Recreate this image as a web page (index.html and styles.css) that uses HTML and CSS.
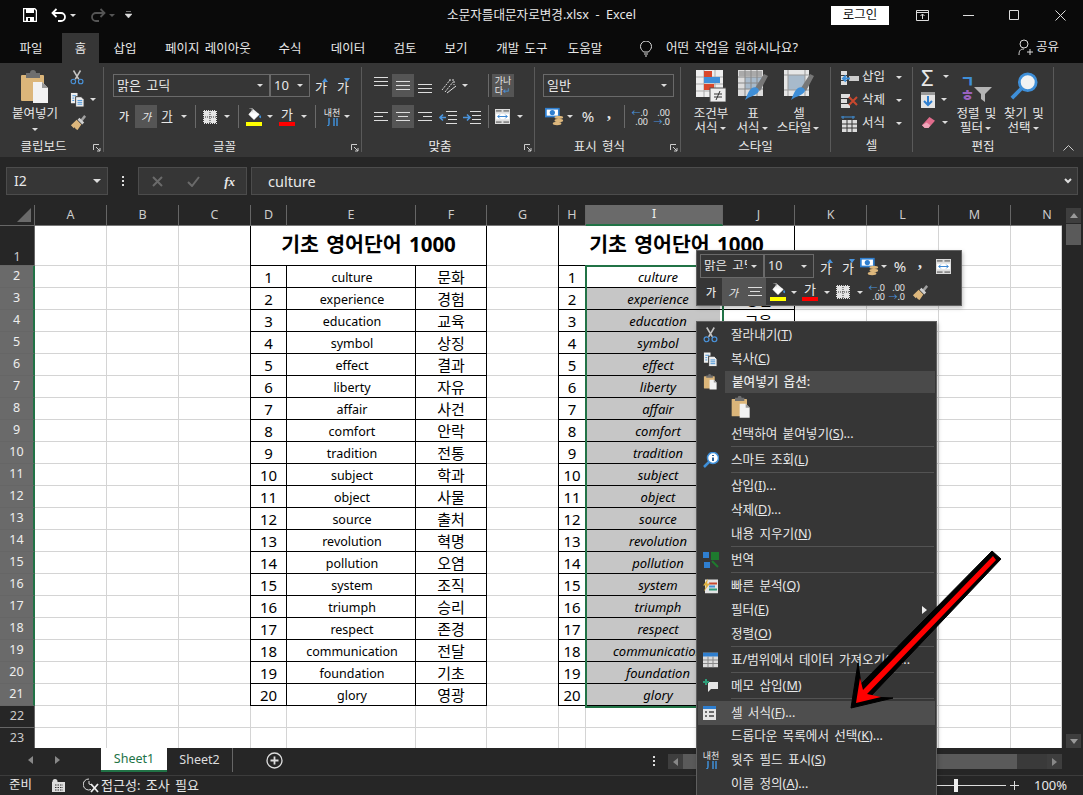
FILE: index.html
```html
<!DOCTYPE html>
<html lang="ko">
<head>
<meta charset="utf-8">
<title>소문자를대문자로변경.xlsx - Excel</title>
<link rel="stylesheet" href="styles.css">
</head>
<body>
<svg class="defs" width="0" height="0" aria-hidden="true">
  <symbol id="paste" viewBox="0 0 30 34"><rect x="1" y="5" width="23" height="26" rx="1" fill="#dcb67a"/><path d="M6 8V3h4a3 3 0 0 1 6 0h4v5z" fill="#6f6f6f"/><path d="M13 12h9l6 6v15H13z" fill="#f2f2f2"/><path d="M22 12v6h6z" fill="#9a9a9a"/></symbol>
  <symbol id="sciss" viewBox="0 0 16 16"><path d="M4 0l6 10M12 0L6 10" stroke="#c4c4c4" stroke-width="1.7" fill="none"/><circle cx="3.8" cy="12.6" r="2.6" fill="none" stroke="#4a94dc" stroke-width="1.3"/><circle cx="12.2" cy="12.6" r="2.6" fill="none" stroke="#4a94dc" stroke-width="1.3"/></symbol>
  <symbol id="copy" viewBox="0 0 16 16"><path d="M1 1h7v11H1z" fill="#eee"/><path d="M2.500 4h4M2.500 6.500h2M2.500 9h2" stroke="#3f8fd8"/><path d="M6 5h6l3 3v8H6z" fill="#eee" stroke="#363636"/><path d="M8 9h5M8 11h5M8 13h5" stroke="#3f8fd8"/></symbol>
  <symbol id="brush" viewBox="0 0 18 18"><path d="M11 6l4-5 2 2-4 5z" fill="#a0a0a0"/><path d="M10 4l5 5-2 2-5-5z" fill="#d0d0d0"/><path d="M7 6l5 5-4 6-2-1-1-2-1 1-3-3z" fill="#ddb77c"/></symbol>
  <symbol id="bucket" viewBox="0 0 18 14"><path d="M8 1l7 6-6 6-6-6z" fill="#f2f2f2"/><path d="M4 6h10l-5 6z" fill="#fff"/><path d="M7 4V0h-3" stroke="#bbb" fill="none"/><path d="M15 8c2-1 2 3 1 3s-2-2-1-3z" fill="#3f8fd8"/></symbol>
  <symbol id="border" viewBox="0 0 14 14"><rect width="14" height="14" fill="#e4e4e4"/><path d="M0 .5h14M.5 0v14M13.500 0v14M0 13.500h14M0 7h14M7 0v14" stroke="#363636" stroke-dasharray="1 1"/></symbol>
  <symbol id="money" viewBox="0 0 22 22"><rect x="0" y="1" width="17" height="11" fill="#2f7fd0"/><rect x="2" y="3" width="13" height="7" fill="#fff"/><circle cx="8.500" cy="6.500" r="3" fill="#2f7fd0"/><ellipse cx="16" cy="12" rx="5" ry="2" fill="#ddb77c"/><ellipse cx="16" cy="15.500" rx="5" ry="2" fill="#ddb77c"/><ellipse cx="14" cy="19" rx="5" ry="2" fill="#ddb77c"/></symbol>
  <symbol id="merge" viewBox="0 0 16 16"><rect width="16" height="16" fill="#ddd"/><path d="M1 1h6v2H1zM9 1h6v2H9zM1 13h6v2H1zM9 13h6v2H9z" fill="#888"/><rect x="1" y="5" width="14" height="6" fill="#fff"/><path d="M3 8h10M5 6l-2 2 2 2M11 6l2 2-2 2" stroke="#2f7fd0" fill="none"/></symbol>
  <symbol id="tL" viewBox="0 0 14 14"><path d="M0 2.500h14M0 6.500h9M0 10.500h14" stroke="#ddd"/></symbol>
  <symbol id="tC" viewBox="0 0 14 14"><path d="M0 2.500h14M2 6.500h10M0 10.500h14" stroke="#ddd"/></symbol>
  <symbol id="tR" viewBox="0 0 14 14"><path d="M0 2.500h14M5 6.500h9M0 10.500h14" stroke="#ddd"/></symbol>
  <symbol id="v3" viewBox="0 0 14 14"><path d="M0 2.500h14M0 6.500h14M0 10.500h14" stroke="#ddd"/></symbol>
  <symbol id="indL" viewBox="0 0 18 14"><path d="M7 1.500h11M9 5.500h9M9 9.500h9M7 13.500h11" stroke="#ddd"/><path d="M7 7.500H1M4 4.500L1 7.500l3 3" stroke="#4a94dc" stroke-width="1.600" fill="none"/></symbol>
  <symbol id="indR" viewBox="0 0 18 14"><path d="M7 1.500h11M9 5.500h9M9 9.500h9M7 13.500h11" stroke="#ddd"/><path d="M0 7.500h6M4 4.500l3 3-3 3" stroke="#4a94dc" stroke-width="1.600" fill="none"/></symbol>
  <symbol id="orient" viewBox="0 0 16 16"><path d="M1 12L9 2M4 14l8-10M8 2h5v5" stroke="#ddd" fill="none" stroke-dasharray="2 1"/><path d="M6 15l9-7" stroke="#ddd"/></symbol>
  <symbol id="cond" viewBox="0 0 30 32"><rect width="27" height="27" fill="#eee"/><path d="M8 0v27M19 0v27M0 7h27M0 14h27M0 21h27" stroke="#aaa"/><rect x="8" y="1" width="8" height="6" fill="#d9482b"/><rect x="8" y="7" width="16" height="6" fill="#3f8fd8"/><rect x="8" y="14" width="10" height="6" fill="#d9482b"/><rect x="14" y="18" width="16" height="14" fill="#eee" stroke="#555"/><path d="M18 24h8M18 27h8M24 21l-4 9" stroke="#333"/></symbol>
  <symbol id="tbl" viewBox="0 0 30 32"><rect width="25" height="26" fill="#dcdcdc"/><rect x="1" y="1" width="23" height="5" fill="#aaa"/><rect x="7" y="7" width="17" height="12" fill="#a8bacb"/><path d="M7 0v26M13 0v26M19 0v26M0 7h25M0 13h25M0 19h25" stroke="#888"/><path d="M17 18l9-14 4 2-8 15z" fill="#777"/><path d="M14 18c3-2 7 0 7 3-3 5-9 5-14 9 2-4 3-9 7-12z" fill="#3f8fd8"/></symbol>
  <symbol id="sty" viewBox="0 0 30 32"><rect width="25" height="26" fill="#e6e6e6"/><rect x="4" y="5" width="17" height="15" fill="#a8bacb"/><path d="M0 5h25M4 0v26M21 0v26M0 20h25" stroke="#999"/><path d="M17 18l9-14 4 2-8 15z" fill="#777"/><path d="M14 18c3-2 7 0 7 3-3 5-9 5-14 9 2-4 3-9 7-12z" fill="#3f8fd8"/></symbol>
  <symbol id="cIns" viewBox="0 0 18 14"><path d="M0 0h6v4H0zM0 5h6v4H0zM0 10h6v4H0z" fill="#ddd"/><rect x="8" y="5" width="10" height="5" fill="#ccc"/><path d="M9 7.500H2M5 4.500l-3 3 3 3" stroke="#3f8fd8" stroke-width="2" fill="none"/></symbol>
  <symbol id="cDel" viewBox="0 0 18 14"><path d="M0 0h9v4H0zM0 5h6v4H0zM0 10h9v4H0z" fill="#ddd"/><path d="M8 3l8 8M16 3l-8 8" stroke="#c8482e" stroke-width="2"/></symbol>
  <symbol id="cFmt" viewBox="0 0 18 16"><path d="M0 1h14M2 0v3M12 0v3" stroke="#3f8fd8"/><rect x="1" y="4" width="15" height="12" fill="#ddd"/><path d="M6 4v12M11 4v12M1 8h15M1 12h15" stroke="#363636"/></symbol>
  <symbol id="fillD" viewBox="0 0 14 16"><rect width="14" height="16" fill="#e4e4e4"/><rect width="14" height="3" fill="#999"/><path d="M7 4v9M3 9l4 4 4-4" stroke="#2f7fd0" stroke-width="2" fill="none"/></symbol>
  <symbol id="erase" viewBox="0 0 16 14"><path d="M9 1l6 4-7 8H4L1 10z" fill="#e06c8c"/><path d="M1 10l3 3h4l2-3-4-3z" fill="#f0a6ba"/></symbol>
  <symbol id="funnel" viewBox="0 0 18 16"><path d="M0 1h18l-7 7v8l-4-3V8z" fill="#b4b4b4"/></symbol>
  <symbol id="mag" viewBox="0 0 30 30"><circle cx="19" cy="11" r="9" fill="#f2f2f2" stroke="#3f8fd8" stroke-width="3"/><path d="M12 18L2 28" stroke="#3f8fd8" stroke-width="4"/></symbol>
  <symbol id="launch" viewBox="0 0 8 8"><path d="M.5 6V.5H6M3 3l4 4M7 4v3H4" stroke="#ccc" fill="none"/></symbol>
</svg>

<header class="title">
  <div class="qat">
    <svg class="q-save" width="14" height="14" viewBox="0 0 14 14"><path d="M.5.5h11l2 2v11H.5z" fill="none" stroke="#fff" stroke-width="1.500"/><path d="M3 1h8v4H3zM3 9h8v5H3z" fill="#fff"/><path d="M5 10h2v3H5z" fill="#0a0a0a"/></svg>
    <svg class="q-undo" width="16" height="14" viewBox="0 0 16 14"><path d="M2 5h8a4 4 0 0 1 0 8H7M5.500 1L1.500 5l4 4" fill="none" stroke="#fff" stroke-width="1.800"/></svg>
    <i class="a a-q"></i>
    <svg class="q-redo" width="16" height="14" viewBox="0 0 16 14"><path d="M14 5H6a4 4 0 0 0 0 8h3M10.500 1l4 4-4 4" fill="none" stroke="#555" stroke-width="1.800"/></svg>
    <i class="a a-q dim"></i>
    <svg class="q-cust" width="7" height="8" viewBox="0 0 7 8"><path d="M1 .5h5M0 3h7l-3.500 4z" fill="#ddd" stroke="#ddd" stroke-width=".5"/></svg>
  </div>
  <div class="doc">소문자를대문자로변경.xlsx &nbsp;-&nbsp; Excel</div>
  <div class="win">
    <button class="login">로그인</button>
    <span class="wb"><svg width="13" height="11" viewBox="0 0 13 11"><path d="M.5.500h12v10H.5zM.5 2.500h12M6.500 9V4M4.500 6l2-2 2 2" fill="none" stroke="#ddd"/></svg></span>
    <span class="wb"><svg width="11" height="1" viewBox="0 0 11 1"><path d="M0 .5h11" stroke="#ddd"/></svg></span>
    <span class="wb"><svg width="10" height="10" viewBox="0 0 10 10"><path d="M.5.500h9v9h-9z" fill="none" stroke="#ddd"/></svg></span>
    <span class="wb"><svg width="11" height="11" viewBox="0 0 11 11"><path d="M.5.500l10 10M10.500.500l-10 10" stroke="#ddd"/></svg></span>
  </div>
</header>

<nav class="tabs">
  <div class="tabset">
    <span>파일</span><span class="on">홈</span><span>삽입</span><span>페이지 레이아웃</span><span>수식</span><span>데이터</span><span>검토</span><span>보기</span><span>개발 도구</span><span>도움말</span>
  </div>
  <svg class="bulb" width="12" height="16" viewBox="0 0 12 16"><path d="M3.500 11C2 9 .5 8 .5 5.500a5.500 5.500 0 0 1 11 0C11.500 8 10 9 8.500 11zM4 13h4M5 15h2" fill="none" stroke="#ddd"/></svg>
  <span class="tell">어떤 작업을 원하시나요?</span>
  <div class="share">
    <svg width="15" height="17" viewBox="0 0 15 17"><circle cx="6" cy="5" r="4" fill="none" stroke="#ddd"/><path d="M1 16c0-4 1-6 5-6M9 13h6M12 10v6" fill="none" stroke="#ddd"/></svg>
    <span>공유</span>
  </div>
</nav>

<section class="ribbon">
  <div class="group g-clip">
    <div class="g-body clip">
      <div class="big-paste">
        <svg width="30" height="34"><use href="#paste"/></svg>
        <span>붙여넣기</span>
        <i class="a"></i>
      </div>
      <div class="clip-side">
        <svg width="14" height="15"><use href="#sciss"/></svg>
        <div class="copy-row"><svg width="15" height="15"><use href="#copy"/></svg><i class="a"></i></div>
        <svg width="17" height="17"><use href="#brush"/></svg>
      </div>
    </div>
    <div class="g-label"><span>클립보드</span><svg class="launch" width="8" height="8"><use href="#launch"/></svg></div>
  </div>

  <div class="group g-font">
    <div class="g-body stack">
      <div class="row">
        <div class="sel w157"><span>맑은 고딕</span><i class="a"></i></div>
        <div class="sel w40"><span>10</span><i class="a"></i></div>
        <span class="b gaup">가<i class="up"></i></span>
        <span class="b gadn">가<i class="dn"></i></span>
      </div>
      <div class="row r2">
        <span class="b fb">가</span><span class="b fi hl">가</span><span class="b fu w20">가</span><i class="a w14"></i>
        <i class="sp ml4"></i>
        <span class="b ml3"><svg width="14" height="14"><use href="#border"/></svg></span><i class="a"></i>
        <i class="sp ml5"></i>
        <span class="b ml4 col"><svg width="18" height="13"><use href="#bucket"/></svg><i class="bar yel"></i></span><i class="a w10"></i>
        <span class="b ml1 col fc">가<i class="bar red"></i></span><i class="a"></i>
        <i class="sp ml5"></i>
        <span class="b ml5 col phon"><small>내천</small><svg width="14" height="8" viewBox="0 0 14 8"><path d="M2 8c2 0 2-1 2-3V0M9 0v8M12 0v8" stroke="#3f8fd8" stroke-width="1.500" fill="none"/></svg></span><i class="a w8"></i>
      </div>
    </div>
    <div class="g-label"><span>글꼴</span><svg class="launch" width="8" height="8"><use href="#launch"/></svg></div>
  </div>

  <div class="group g-align">
    <div class="g-body stack">
      <div class="row">
        <span class="b"><svg class="nudge-up" width="14" height="14"><use href="#v3"/></svg></span>
        <span class="b hl"><svg width="14" height="14"><use href="#v3"/></svg></span>
        <span class="b"><svg class="nudge-dn" width="14" height="14"><use href="#v3"/></svg></span>
        <span class="b ml2"><svg width="16" height="16"><use href="#orient"/></svg></span><i class="a w10"></i>
        <i class="sp ml18"></i>
        <span class="b hl ml3 wrap">가나<br>다<em>↵</em></span>
      </div>
      <div class="row r2">
        <span class="b"><svg width="14" height="14"><use href="#tL"/></svg></span>
        <span class="b hl"><svg width="14" height="14"><use href="#tC"/></svg></span>
        <span class="b"><svg width="14" height="14"><use href="#tR"/></svg></span>
        <span class="b ml1"><svg width="18" height="14"><use href="#indL"/></svg></span>
        <span class="b ml2"><svg width="18" height="14"><use href="#indR"/></svg></span>
        <i class="sp ml5"></i>
        <span class="b ml2"><svg width="15" height="15"><use href="#merge"/></svg></span><i class="a ml1"></i>
      </div>
    </div>
    <div class="g-label"><span>맞춤</span><svg class="launch" width="8" height="8"><use href="#launch"/></svg></div>
  </div>

  <div class="group g-num">
    <div class="g-body stack">
      <div class="row"><div class="sel w131"><span>일반</span><i class="a"></i></div></div>
      <div class="row r2">
        <span class="b"><svg width="19" height="19"><use href="#money"/></svg></span><i class="a w10"></i>
        <span class="b ml2 pct">%</span><span class="b w20 comma">,</span>
        <i class="sp ml5"></i>
        <span class="b ml3 dec"><span><em>←</em>.0</span><span>.00</span></span>
        <span class="b dec"><span>.00</span><span><em>→</em>.0</span></span>
      </div>
    </div>
    <div class="g-label"><span>표시 형식</span><svg class="launch" width="8" height="8"><use href="#launch"/></svg></div>
  </div>

  <div class="group g-style">
    <div class="g-body bigs">
      <div class="bigb w44"><svg width="30" height="32"><use href="#cond"/></svg><span>조건부</span><span>서식<i class="a w10 inl"></i></span></div>
      <div class="bigb w40"><svg width="30" height="32"><use href="#tbl"/></svg><span>표</span><span>서식<i class="a w10 inl"></i></span></div>
      <div class="bigb w52"><svg width="30" height="32"><use href="#sty"/></svg><span>셀</span><span>스타일<i class="a w10 inl"></i></span></div>
    </div>
    <div class="g-label plain"><span>스타일</span></div>
  </div>

  <div class="group g-cell">
    <div class="g-body cellcol">
      <div class="c-row"><svg width="18" height="14"><use href="#cIns"/></svg><span>삽입</span><i class="a"></i></div>
      <div class="c-row"><svg width="18" height="14"><use href="#cDel"/></svg><span>삭제</span><i class="a"></i></div>
      <div class="c-row"><svg width="18" height="16"><use href="#cFmt"/></svg><span>서식</span><i class="a"></i></div>
    </div>
    <div class="g-label plain"><span>셀</span></div>
  </div>

  <div class="group g-edit">
    <div class="g-body edit">
      <div class="e-side">
        <div class="e-row"><span class="sigma">Σ</span><i class="a"></i></div>
        <div class="e-row"><svg width="14" height="16"><use href="#fillD"/></svg><i class="a"></i></div>
        <div class="e-row"><svg width="15" height="13"><use href="#erase"/></svg><i class="a"></i></div>
      </div>
      <div class="bigb w47">
        <div class="sorti"><div class="ko"><b class="kb">ㄱ</b><b class="kp">ㅎ</b></div><svg width="18" height="16"><use href="#funnel"/></svg></div>
        <span>정렬 및</span><span>필터<i class="a w10 inl"></i></span>
      </div>
      <div class="bigb w48"><svg width="28" height="28"><use href="#mag"/></svg><span>찾기 및</span><span>선택<i class="a w10 inl"></i></span></div>
    </div>
    <div class="g-label plain"><span>편집</span></div>
  </div>
  <div class="collapse"><svg width="11" height="6" viewBox="0 0 11 6"><path d="M.5 5.500l5-5 5 5" fill="none" stroke="#ccc"/></svg></div>
</section>

<section class="formula">
  <div class="namebox"><span>I2</span><i class="a big"></i></div>
  <div class="vdots"><i></i><i></i><i></i></div>
  <div class="fbtns">
    <svg width="11" height="11" viewBox="0 0 11 11"><path d="M1 1l9 9M10 1l-9 9" stroke="#6a6a6a" stroke-width="2"/></svg>
    <svg width="13" height="11" viewBox="0 0 13 11"><path d="M1 6l4 4 7-9" stroke="#6a6a6a" stroke-width="2" fill="none"/></svg>
    <span class="fx">fx</span>
  </div>
  <div class="finput"><span>culture</span><svg width="8" height="6" viewBox="0 0 8 6"><path d="M1 1l3 3 3-3" stroke="#ddd" stroke-width="2" fill="none"/></svg></div>
</section>

<main class="sheet">
  <div class="corner"><i></i></div>
  <div class="colheads">
    <span>A</span><span>B</span><span>C</span><span>D</span><span>E</span><span>F</span><span>G</span><span>H</span><span class="cur">I</span><span>J</span><span>K</span><span>L</span><span>M</span><span class="clipcol">N</span>
  </div>
  <div class="vscroll"><i class="vb"><i class="tri-up"></i></i><i class="vthumb"></i><i class="vb low"><i class="tri-dn"></i></i></div>
  <div class="rowheads">
    <span class="r1">1</span><span class="cur">2</span><span class="cur">3</span><span class="cur">4</span><span class="cur">5</span><span class="cur">6</span><span class="cur">7</span><span class="cur">8</span><span class="cur">9</span><span class="cur">10</span><span class="cur">11</span><span class="cur">12</span><span class="cur">13</span><span class="cur">14</span><span class="cur">15</span><span class="cur">16</span><span class="cur">17</span><span class="cur">18</span><span class="cur">19</span><span class="cur">20</span><span class="cur">21</span><span>22</span><span class="last">23</span>
  </div>
  <div class="cells">
    <div class="lines"><i></i><i></i><i></i><i></i><i></i><i></i><i></i><i></i><i></i><i></i><i></i><i></i><i></i><i></i></div>
    <table class="vocab t1">
      <colgroup><col class="c-n"><col class="c-e"><col class="c-k"></colgroup>
      <tr class="head"><td colspan="3">기초 영어단어 1000</td></tr>
      <tr><td class="n">1</td><td class="e">culture</td><td class="k">문화</td></tr>
      <tr><td class="n">2</td><td class="e">experience</td><td class="k">경험</td></tr>
      <tr><td class="n">3</td><td class="e">education</td><td class="k">교육</td></tr>
      <tr><td class="n">4</td><td class="e">symbol</td><td class="k">상징</td></tr>
      <tr><td class="n">5</td><td class="e">effect</td><td class="k">결과</td></tr>
      <tr><td class="n">6</td><td class="e">liberty</td><td class="k">자유</td></tr>
      <tr><td class="n">7</td><td class="e">affair</td><td class="k">사건</td></tr>
      <tr><td class="n">8</td><td class="e">comfort</td><td class="k">안락</td></tr>
      <tr><td class="n">9</td><td class="e">tradition</td><td class="k">전통</td></tr>
      <tr><td class="n">10</td><td class="e">subject</td><td class="k">학과</td></tr>
      <tr><td class="n">11</td><td class="e">object</td><td class="k">사물</td></tr>
      <tr><td class="n">12</td><td class="e">source</td><td class="k">출처</td></tr>
      <tr><td class="n">13</td><td class="e">revolution</td><td class="k">혁명</td></tr>
      <tr><td class="n">14</td><td class="e">pollution</td><td class="k">오염</td></tr>
      <tr><td class="n">15</td><td class="e">system</td><td class="k">조직</td></tr>
      <tr><td class="n">16</td><td class="e">triumph</td><td class="k">승리</td></tr>
      <tr><td class="n">17</td><td class="e">respect</td><td class="k">존경</td></tr>
      <tr><td class="n">18</td><td class="e">communication</td><td class="k">전달</td></tr>
      <tr><td class="n">19</td><td class="e">foundation</td><td class="k">기초</td></tr>
      <tr><td class="n">20</td><td class="e">glory</td><td class="k">영광</td></tr>
    </table>
    <table class="vocab t2">
      <colgroup><col class="c-n2"><col class="c-e2"><col class="c-k2"></colgroup>
      <tr class="head"><td colspan="3">기초 영어단어 1000</td></tr>
      <tr><td class="n">1</td><td class="e i active">culture</td><td class="k">문화</td></tr>
      <tr><td class="n">2</td><td class="e i">experience</td><td class="k">경험</td></tr>
      <tr><td class="n">3</td><td class="e i">education</td><td class="k">교육</td></tr>
      <tr><td class="n">4</td><td class="e i">symbol</td><td class="k">상징</td></tr>
      <tr><td class="n">5</td><td class="e i">effect</td><td class="k">결과</td></tr>
      <tr><td class="n">6</td><td class="e i">liberty</td><td class="k">자유</td></tr>
      <tr><td class="n">7</td><td class="e i">affair</td><td class="k">사건</td></tr>
      <tr><td class="n">8</td><td class="e i">comfort</td><td class="k">안락</td></tr>
      <tr><td class="n">9</td><td class="e i">tradition</td><td class="k">전통</td></tr>
      <tr><td class="n">10</td><td class="e i">subject</td><td class="k">학과</td></tr>
      <tr><td class="n">11</td><td class="e i">object</td><td class="k">사물</td></tr>
      <tr><td class="n">12</td><td class="e i">source</td><td class="k">출처</td></tr>
      <tr><td class="n">13</td><td class="e i">revolution</td><td class="k">혁명</td></tr>
      <tr><td class="n">14</td><td class="e i">pollution</td><td class="k">오염</td></tr>
      <tr><td class="n">15</td><td class="e i">system</td><td class="k">조직</td></tr>
      <tr><td class="n">16</td><td class="e i">triumph</td><td class="k">승리</td></tr>
      <tr><td class="n">17</td><td class="e i">respect</td><td class="k">존경</td></tr>
      <tr><td class="n">18</td><td class="e i">communication</td><td class="k">전달</td></tr>
      <tr><td class="n">19</td><td class="e i">foundation</td><td class="k">기초</td></tr>
      <tr><td class="n">20</td><td class="e i">glory</td><td class="k">영광</td></tr>
    </table>
    <div class="range"></div>
  </div>
</main>

<section class="sheetbar">
  <div class="nav"><i class="tl"></i><i class="tr"></i></div>
  <div class="stab on">Sheet1</div>
  <div class="stab">Sheet2</div>
  <svg class="plus" width="17" height="17" viewBox="0 0 17 17"><circle cx="8.500" cy="8.500" r="7.500" fill="none" stroke="#ddd" stroke-width="1.300"/><path d="M4.500 8.500h8M8.500 4.500v8" stroke="#ddd" stroke-width="1.800"/></svg>
  <div class="hdots"><i></i><i></i><i></i></div>
  <div class="hscroll"><i class="hb"><i class="tl"></i></i><i class="hthumb"></i><i class="hb"><i class="tr"></i></i></div>
</section>

<footer class="status">
  <span class="ready">준비</span>
  <svg class="macro" width="13" height="13" viewBox="0 0 13 13"><rect x="0" y="3" width="13" height="10" fill="#ddd"/><circle cx="3" cy="2.500" r="2.500" fill="#ddd"/><path d="M3 6h8M3 8.500h8M3 11h8" stroke="#333" stroke-dasharray="1.500 1"/></svg>
  <svg class="acc" width="16" height="15" viewBox="0 0 16 15"><path d="M6 1a5.500 5.500 0 1 0 2 10.500M6 3v3l3 1" fill="none" stroke="#ddd"/><path d="M8 6l7 8M15 6l-7 8" stroke="#eee" stroke-width="1.800"/></svg>
  <span class="acc-t">접근성: 조사 필요</span>
  <div class="zoom">
    <div class="slider"><i></i></div>
    <svg width="9" height="9" viewBox="0 0 9 9"><path d="M0 4.500h9M4.500 0v9" stroke="#ddd"/></svg>
    <span>100%</span>
  </div>
</footer>

<div class="mini">
  <div class="mrow">
    <div class="sel w64"><span class="clipd">맑은 고딕</span><i class="a"></i></div>
    <div class="sel w50"><span>10</span><i class="a"></i></div>
    <span class="b gaup ml1">가<i class="up"></i></span>
    <span class="b gadn">가<i class="dn"></i></span>
    <span class="b w20"><svg width="19" height="19"><use href="#money"/></svg></span><i class="a w10"></i>
    <span class="b pct w20 ml1">%</span><span class="b comma w20">,</span>
    <span class="b w26"><svg width="15" height="15"><use href="#merge"/></svg></span>
  </div>
  <div class="mrow r2m">
    <span class="b fb">가</span>
    <span class="b fi hl">가</span><span class="b hl"><svg width="14" height="14"><use href="#tC"/></svg></span>
    <span class="b ml1 col"><svg width="18" height="13"><use href="#bucket"/></svg><i class="bar yel"></i></span><i class="a w10"></i>
    <span class="b col fc">가<i class="bar red"></i></span><i class="a"></i>
    <span class="b w20"><svg width="14" height="14"><use href="#border"/></svg></span><i class="a w14"></i>
    <span class="b w20 dec"><span><em>←</em>.0</span><span>.00</span></span>
    <span class="b w20 dec"><span>.00</span><span><em>→</em>.0</span></span>
    <span class="b w26"><svg width="17" height="17"><use href="#brush"/></svg></span>
  </div>
</div>

<div class="ctx">
  <div class="mi"><svg width="15" height="16"><use href="#sciss"/></svg><span>잘라내기(<u>T</u>)</span></div>
  <div class="mi"><svg width="15" height="15"><use href="#copy"/></svg><span>복사(<u>C</u>)</span></div>
  <div class="mi head"><svg width="15" height="16"><use href="#paste"/></svg><span>붙여넣기 옵션:</span></div>
  <div class="mi opts"><svg width="20" height="23"><use href="#paste"/></svg></div>
  <div class="mi"><span>선택하여 붙여넣기(<u>S</u>)...</span></div>
  <hr>
  <div class="mi"><svg width="16" height="16" viewBox="0 0 16 16"><circle cx="10" cy="6" r="5.500" fill="#fff" stroke="#3f8fd8" stroke-width="1.500"/><path d="M6 10l-5 5" stroke="#3f8fd8" stroke-width="2.500"/><path d="M10 3v1M10 5.500V9" stroke="#2a5f98" stroke-width="2"/></svg><span>스마트 조회(<u>L</u>)</span></div>
  <hr>
  <div class="mi"><span>삽입(<u>I</u>)...</span></div>
  <div class="mi"><span>삭제(<u>D</u>)...</span></div>
  <div class="mi"><span>내용 지우기(<u>N</u>)</span></div>
  <hr>
  <div class="mi"><svg width="16" height="16" viewBox="0 0 16 16"><path d="M0 0h6v6H0zM1 10h6v6H1z" fill="#2f7fd0"/><path d="M9 1h6v6H9zM9 9l6 6" fill="#1e7a2e" stroke="#1e7a2e" stroke-width="2"/></svg><span>번역</span></div>
  <hr>
  <div class="mi"><svg width="15" height="15" viewBox="0 0 15 15"><rect x="2" y="1" width="13" height="14" fill="#e4e4e4"/><path d="M6 5h8" stroke="#c8482e" stroke-width="2"/><path d="M6 8h6" stroke="#3f8fd8" stroke-width="2"/><path d="M6 11h8" stroke="#2e9c78" stroke-width="2"/><path d="M5 0L0 7h3l-2 6 6-8H4z" fill="#ddb040"/></svg><span>빠른 분석(<u>Q</u>)</span></div>
  <div class="mi"><span>필터(<u>E</u>)</span><i class="sub"></i></div>
  <div class="mi"><span>정렬(<u>O</u>)</span></div>
  <hr>
  <div class="mi"><svg width="15" height="15" viewBox="0 0 15 15"><rect width="15" height="15" fill="#dcdcdc"/><rect width="15" height="4" fill="#2f7fd0"/><path d="M0 7.500h15M0 11h15M5 4v11M10 4v11" stroke="#888"/></svg><span>표/범위에서 데이터 가져오기(<u>Y</u>)...</span></div>
  <hr>
  <div class="mi"><svg width="15" height="14" viewBox="0 0 15 14"><path d="M5 3h10v7H8l-3 3z" fill="#e6e6e6"/><path d="M3 0v6M0 3h6" stroke="#2e9c78" stroke-width="2"/></svg><span>메모 삽입(<u>M</u>)</span></div>
  <hr>
  <div class="mi cur"><svg width="13" height="14" viewBox="0 0 13 14"><rect width="13" height="14" fill="#e6e6e6"/><rect width="13" height="3" fill="#2f7fd0"/><path d="M2 6h2M6 6h5M2 10h2M6 10h5" stroke="#444" stroke-width="1.300"/></svg><span>셀 서식(<u>F</u>)...</span></div>
  <div class="mi"><span>드롭다운 목록에서 선택(<u>K</u>)...</span></div>
  <div class="mi"><span class="micon col phon"><small>내천</small><svg width="14" height="8" viewBox="0 0 14 8"><path d="M2 8c2 0 2-1 2-3V0M9 0v8M12 0v8" stroke="#3f8fd8" stroke-width="1.500" fill="none"/></svg></span><span>윗주 필드 표시(<u>S</u>)</span></div>
  <div class="mi"><span>이름 정의(<u>A</u>)...</span></div>
</div>

<svg class="arrow" width="160" height="170" viewBox="850 548 160 170">
  <path d="M851 708L858 663L861 684L992 551L1001 559L870 697L893 698Z" fill="#000" stroke="#000" stroke-linejoin="miter"/>
  <path d="M856 703L860 678L863 690L993 556L996 560L867 694L881 697Z" fill="#f00"/>
</svg>
</body>
</html>
```

FILE: styles.css
```css
* { box-sizing: border-box; }
html, body { margin: 0; padding: 0; }
body {
  width: 1083px; height: 795px; overflow: hidden; position: relative;
  background: #262626; color: #e8e8e8;
  font-family: "Noto Sans", "Noto Sans CJK KR", sans-serif;
  font-size: 12.500px; line-height: 1;
}
i, em { font-style: normal; }
.defs { position: absolute; }
svg { display: block; flex: none; }

/* title bar */
.title { height: 30px; background: #0a0a0a; display: grid; grid-template-columns: 1fr auto 1fr; align-items: center; }
.qat { display: flex; align-items: center; }
.q-save { margin-left: 23px; }
.q-undo { margin-left: 14px; }
.q-redo { margin-left: 11px; }
.q-cust { margin-left: 7px; }
.a-q { width: 13px; }
.dim::after { border-top-color: #555 !important; }
.doc { font-size: 12.600px; color: #e8e8e8; padding-top: 1px; }
.win { display: flex; justify-content: flex-end; align-items: center; }
.login { width: 58px; height: 19px; margin: 0 10px 0 0; padding: 0; border: 0; background: #fff; color: #111; font: inherit; font-size: 12.500px; word-spacing: 0; }
.wb { width: 46px; height: 30px; display: flex; align-items: center; justify-content: center; }

/* tabs */
.tabs { height: 33px; background: #0a0a0a; display: flex; align-items: flex-end; position: relative; word-spacing: 2px; }
.tabset { display: grid; grid-template-columns: 62px 37px 52px 114px 50px 66px 48px 54px 78px 48px; }
.tabset span { height: 30px; line-height: 31px; text-align: center; }
.tabset .on { background: #363636; }
.bulb { margin: 0 0 6px 31px; }
.tell { margin: 0 0 8px 14px; font-size: 12.600px; }
.share { margin: 0 24px 7px auto; display: flex; align-items: center; gap: 3px; }

/* ribbon */
.ribbon { height: 94px; background: #363636; display: flex; align-items: flex-start; }
.group { height: 85px; margin-top: 4px; border-right: 1px solid #5a5a5a; display: flex; flex-direction: column; flex: none; }
.g-clip { width: 104px; }
.g-font { width: 258px; }
.g-align { width: 173px; }
.g-num { width: 146px; }
.g-style { width: 150px; }
.g-cell { width: 82px; }
.g-edit { width: 141px; }
.g-body { height: 72px; flex: none; }
.g-label { height: 13px; display: flex; align-items: center; flex: none; margin-top: 2px; }
.g-label > span { flex: 1; text-align: center; white-space: nowrap; word-spacing: 2px; }
.launch { margin-right: 2px; width: 8px; margin-left: 6px; }
.collapse { flex: 1; align-self: flex-end; display: flex; justify-content: center; padding-bottom: 6px; }

.stack { padding: 7px 0 0 8px; }
.g-font .stack { padding-left: 9px; }
.row, .mrow { display: flex; align-items: center; }
.r2 { margin-top: 8px; }
.b { width: 22px; height: 23px; display: flex; align-items: center; justify-content: center; flex: none; position: relative; font-size: 12px; }
.col { flex-direction: column; gap: 1px; }
.hl { background: #555; }
.a { width: 12px; height: 8px; display: flex; align-items: center; justify-content: center; flex: none; }
.a::after { content: ""; border-top: 3px solid #ddd; border-left: 3px solid transparent; border-right: 3px solid transparent; }
.big::after { border-top-width: 4px; border-left-width: 4px; border-right-width: 4px; }
.inl { display: inline-flex; vertical-align: middle; }
.sp { width: 1px; height: 23px; background: #6a6a6a; flex: none; }
.sel { height: 23px; border: 1px solid #6a6a6a; display: flex; align-items: center; justify-content: space-between; padding: 0 3px 0 3px; flex: none; font-size: 13px; word-spacing: 2px; }
.w157 { width: 157px; } .w40 { width: 40px; } .w131 { width: 131px; } .w64 { width: 64px; } .w50 { width: 50px; }
.w44 { width: 44px; } .w52 { width: 52px; } .w47 { width: 47px; } .w48 { width: 48px; } .w26 { width: 26px; }
.w20 { width: 20px; } .w14 { width: 14px; } .w10 { width: 10px; } .w8 { width: 8px; }
.ml1 { margin-left: 1px; } .ml2 { margin-left: 2px; } .ml3 { margin-left: 3px; } .ml4 { margin-left: 4px; } .ml5 { margin-left: 5px; } .ml18 { margin-left: 18px; }
.nudge-up { margin-top: -8px; } .nudge-dn { margin-top: 6px; }

.up, .dn { position: absolute; right: 4px; border-left: 3px solid transparent; border-right: 3px solid transparent; }
.up { top: 4px; border-bottom: 4px solid #4a94dc; }
.dn { top: 4px; border-top: 4px solid #4a94dc; }
.gaup, .gadn { font-size: 13px; padding-top: 4px; }
.fb { font-weight: 500; font-size: 11px; } .fi { font-style: italic; font-size: 11px; } .fu { text-decoration: underline; font-size: 12px; }
.fc { font-size: 13px; }
.bar { width: 16px; height: 4px; display: block; flex: none; }
.yel { background: #ff0; } .red { background: #f00; }
.phon small { font-size: 9px; line-height: 9px; }
.wrap { font-size: 9px; line-height: 10px; display: block; text-align: center; padding-top: 2px; }
.wrap em { color: #4a94dc; }
.pct { font-size: 15px; }
.comma { font-weight: 700; font-size: 16px; padding-bottom: 6px; font-family: "Liberation Serif", serif; }
.dec { flex-direction: column; font-size: 9px; line-height: 9px; align-items: flex-end; padding-right: 2px; }
.dec em { color: #4a94dc; }

/* clipboard */
.clip { display: flex; }
.big-paste { width: 70px; display: flex; flex-direction: column; align-items: center; padding-top: 3px; }
.big-paste span { margin-top: 4px; }
.big-paste .a { margin-top: 5px; }
.big-paste svg { margin-right: 1px; }
.clip-side { display: flex; flex-direction: column; gap: 7px; padding-top: 3px; align-items: flex-start; }
.copy-row { display: flex; align-items: center; gap: 2px; }

/* big buttons */
.bigs { display: flex; padding: 3px 0 0 8px; }
.bigb { display: flex; flex-direction: column; align-items: center; flex: none; font-size: 12.500px; }
.bigb > span { height: 14px; line-height: 14px; white-space: nowrap; word-spacing: 2px; }
.bigb > svg { margin-bottom: 5px; }

.cellcol { padding: 0 0 0 10px; margin-top: -1px; }
.c-row { height: 23px; display: flex; align-items: center; }
.c-row span { width: 26px; margin-left: 3px; }
.c-row .a { margin-left: 5px; }

.edit { display: flex; padding: 3px 0 0 8px; }
.e-side { width: 32px; margin-top: -5px; }
.e-row { height: 23px; width: 36px; display: flex; align-items: center; }
.e-row > :first-child { margin-right: 3px; }
.sigma { font-size: 22px; width: 16px; line-height: 20px; }
.sorti { display: flex; align-items: flex-end; height: 32px; margin-bottom: 5px; gap: 0; }
.ko { display: flex; flex-direction: column; font-weight: 700; font-size: 15px; line-height: 14px; }
.kb { color: #3f8fd8; } .kp { color: #9a62c0; }
.edit .bigb > svg { margin: 2px 0 7px; }

/* formula bar */
.formula { height: 48px; padding: 10px 5px 10px 6px; display: flex; }
.namebox { width: 102px; background: #363636; border: 1px solid #4c4c4c; display: flex; align-items: center; justify-content: space-between; padding: 0 4px 0 7px; font-size: 14px; }
.vdots { width: 30px; display: flex; flex-direction: column; gap: 2px; align-items: center; justify-content: center; }
.vdots i, .hdots i { width: 2px; height: 2px; background: #ddd; display: block; }
.fbtns { width: 109px; background: #363636; border: 1px solid #4c4c4c; display: flex; align-items: center; justify-content: space-between; padding: 0 11px 0 13px; }
.fx { font-family: "Liberation Serif", serif; font-style: italic; font-weight: 700; font-size: 13px; }
.finput { width: 827px; margin-left: 4px; background: #363636; border: 1px solid #4c4c4c; display: flex; align-items: center; justify-content: space-between; padding: 0 5px 0 16px; font-size: 14.500px; }

/* sheet */
.sheet { --cols: 72px 72px 72px 36px 129px 71px 72px 27px 137px 72px 72px 72px 72px 51px; height: 543px; display: grid; grid-template-columns: 35px 1027px 21px; grid-template-rows: 21px 522px; }
.corner { background: #262626; border-bottom: 1px solid #666; border-right: 1px solid #666; position: relative; }
.corner i { position: absolute; right: 3px; bottom: 3px; width: 14px; height: 14px; background: #6a6a6a; clip-path: polygon(100% 0, 100% 100%, 0 100%); }
.colheads { display: grid; grid-template-columns: var(--cols); background: #262626; }
.colheads span { border-right: 1px solid #666; border-bottom: 1px solid #777; display: flex; align-items: center; justify-content: center; color: #ccc; font-size: 12.500px; }
.colheads .cur { background: #6a6a6a; color: #eee; border-bottom: 2px solid #217346; }
.colheads .clipcol { padding-left: 21px; border-right: 0; }
.vscroll { grid-row: 1 / 3; grid-column: 3; background: #262626; padding: 3px 2px 0 4px; display: flex; flex-direction: column; }
.vb { height: 15px; background: #3e3e3e; display: flex; align-items: center; justify-content: center; flex: none; }
.vb.low { margin-top: auto; height: 14px; background: #3e3e3e; }
.vthumb { height: 21px; margin-top: 1px; background: #5a5a5a; display: block; flex: none; }
.tri-up { border-bottom: 5px solid #999; border-left: 4px solid transparent; border-right: 4px solid transparent; }
.tri-dn { border-top: 5px solid #999; border-left: 4px solid transparent; border-right: 4px solid transparent; }
.rowheads { display: grid; grid-template-rows: 40px repeat(21, 22px) 20px; background: #262626; }
.rowheads span { border-bottom: 1px solid #666; border-right: 1px solid #666; display: flex; align-items: center; justify-content: center; color: #ccc; font-size: 12.500px; }
.rowheads .r1 { align-items: flex-end; padding-bottom: 2px; }
.rowheads .cur { background: #6a6a6a; color: #eee; border-right: 2px solid #217346; }
.rowheads .last { border-bottom: 0; }

.cells { position: relative; display: grid; grid-template-columns: var(--cols); grid-template-rows: 40px repeat(21, 22px) 20px; background-color: #fff; color: #000; overflow: hidden; }
.lines { grid-area: 1 / 1 / -1 / -1; display: grid; grid-template-columns: var(--cols); background-image: linear-gradient(#d4d4d4, #d4d4d4), repeating-linear-gradient(to bottom, transparent 0, transparent 21px, #d4d4d4 21px, #d4d4d4 22px); background-size: 100% 1px, 100% 100%; background-position: 0 39px, 0 40px; background-repeat: no-repeat; }
.lines i { border-right: 1px solid #d4d4d4; display: block; }
.vocab { border-collapse: separate; border-spacing: 0; table-layout: fixed; align-self: start; grid-row: 1 / -1; box-shadow: -1px 0 0 #000; background: #fff; font-size: 12.500px; }
.t1 { grid-column: 4 / 7; width: 236px; }
.t2 { grid-column: 8 / 11; width: 236px; }
.c-n { width: 36px; } .c-e { width: 129px; } .c-k { width: 71px; }
.c-n2 { width: 27px; } .c-e2 { width: 137px; } .c-k2 { width: 72px; }
.vocab td { padding: 1px 0 0; border-right: 1px solid #000; border-bottom: 1px solid #000; text-align: center; height: 22px; white-space: nowrap; overflow: hidden; }
.vocab .head td { height: 40px; font-weight: 700; font-size: 20.500px; padding: 0 0 2px; word-spacing: 2px; }
.vocab .n { font-size: 15px; }
.vocab .e { padding: 3px 0 0 2px; }
.vocab .k { font-size: 15px; }
.vocab .i { background: #c6c6c6; font-style: italic; font-size: 13px; box-shadow: inset -2px 0 0 #fff; padding: 1px 0 0 8px; }
.vocab .active { background: #fff; }
.range { position: absolute; left: 550px; top: 39px; width: 139px; height: 443px; border: 2px solid #217346; }

/* sheet tabs */
.sheetbar { height: 27px; display: flex; align-items: flex-start; position: relative; }
.nav { width: 101px; height: 24px; display: flex; align-items: center; padding-left: 28px; gap: 22px; }
.tl { border-right: 5px solid #888; border-top: 4px solid transparent; border-bottom: 4px solid transparent; display: block; }
.tr { border-left: 5px solid #888; border-top: 4px solid transparent; border-bottom: 4px solid transparent; display: block; }
.stab { width: 66px; height: 24px; display: flex; align-items: center; justify-content: center; font-size: 12.500px; color: #ddd; }
.stab.on { background: #fff; color: #217346; border-bottom: 2px solid #217346; }
.stab:not(.on) { border-right: 1px solid #666; }
.plus { margin: 4px 0 0 33px; }
.hdots { display: flex; flex-direction: column; gap: 2px; margin: 8px 0 0 369px; width: 3px; align-items: center; }
.hscroll { position: absolute; left: 668px; top: 6px; width: 394px; height: 15px; display: flex; background: #3a3a3a; }
.hb { width: 15px; background: #3e3e3e; display: flex; align-items: center; justify-content: center; flex: none; }
.hthumb { width: 334px; background: #5a5a5a; display: block; }
.hb:last-child { margin-left: auto; }

/* status bar */
.status { height: 20px; border-top: 1px solid #3c3c3c; display: flex; align-items: center; font-size: 12.500px; position: relative; }
.ready { margin-left: 9px; width: 23px; white-space: nowrap; }
.macro { margin-left: 20px; }
.acc { margin: 0 2px 0 18px; }
.acc-t { font-size: 13px; word-spacing: 2px; white-space: nowrap; }
.zoom { margin-left: auto; margin-right: 19px; display: flex; align-items: center; gap: 15px; }
.zoom span { font-size: 13px; width: 30px; }
.zoom svg { margin-left: -11px; }
.slider { width: 70px; height: 1px; background: #ddd; position: relative; }
.slider i { position: absolute; left: 18px; top: -6px; width: 4px; height: 13px; background: #eee; }

/* mini toolbar */
.mini { position: absolute; left: 696px; top: 250px; width: 266px; height: 56px; background: #363636; border: 1px solid #626262; padding: 3px 0 0 3px; box-shadow: 1px 2px 4px rgba(0,0,0,.25); z-index: 3; }
.mini .sel { height: 24px; font-size: 12.500px; padding: 0 3px; }
.mini .clipd { width: 43px; overflow: hidden; white-space: nowrap; }
.r2m { margin-top: 0; height: 28px; }
.r2m .fb { margin-left: 0; }
.r2m .b { height: 28px; }

/* context menu */
.ctx { position: absolute; left: 696px; top: 321px; width: 241px; height: 480px; background: #363636; border: 1px solid #5f5f5f; padding: 1px 1px 0; box-shadow: 1px 2px 4px rgba(0,0,0,.25); z-index: 3; font-size: 12.600px; word-spacing: 2px; }
.mi { height: 24px; display: flex; align-items: center; padding-left: 33px; position: relative; white-space: nowrap; }
.mi > span { padding-top: 1px; }
.mi > svg, .micon { position: absolute; left: 5px; top: 50%; transform: translateY(-50%); }
.mi.head { height: 22px; }
.mi.head span { margin-left: 1px; font-weight: 500; position: relative; }
.mi.head::before { content: ""; position: absolute; left: 27px; right: 0; top: 0; bottom: 0; background: #4a4a4a; }
.mi.opts { height: 28px; }
.mi.opts > svg { left: 33px; }
.mi:nth-child(5) { margin-top: 1px; }
.mi.cur { background: #4e4e4e; margin-top: 1px; margin-bottom: -1px; }
.mi .micon { display: flex; flex-direction: column; align-items: center; width: 16px; gap: 1px; padding-top: 0; }
.sub { position: absolute; right: 8px; border-left: 5px solid #eee; border-top: 4px solid transparent; border-bottom: 4px solid transparent; }
.ctx hr { margin: 0 1px 0 33px; height: 2px; border: 0; border-top: 1px solid #535353; padding: 0; }

.arrow { position: absolute; left: 850px; top: 548px; z-index: 4; pointer-events: none; }
```
